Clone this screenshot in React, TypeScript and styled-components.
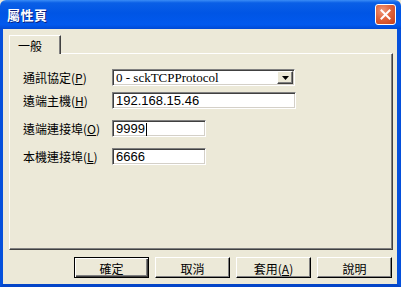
import React from "react";
import styled, { createGlobalStyle } from "styled-components";

const GlobalStyle = createGlobalStyle`
  html, body {
    margin: 0;
    padding: 0;
    background: #ece9d8;
  }
  body {
    font-family: "Noto Sans CJK TC", "Liberation Sans", sans-serif;
    font-size: 12px;
  }
`;

const Window = styled.div`
  width: 401px;
  height: 287px;
  display: flex;
  flex-direction: column;
  overflow: hidden;
`;

const TitleBar = styled.div`
  height: 29px;
  flex: none;
  display: flex;
  align-items: center;
  justify-content: space-between;
  padding: 0 5px 0 7px;
  background: linear-gradient(
    #3a8cf6 0%,
    #0a5fe6 10%,
    #0055e5 45%,
    #0159ee 85%,
    #0049d4 100%
  );
  border-radius: 6px 6px 0 0;
`;

const Title = styled.span`
  color: #fff;
  font-weight: bold;
  font-size: 13px;
  letter-spacing: 0.5px;
  text-shadow: 1px 1px 0 #0a1e7a;
`;

const CloseButton = styled.div`
  width: 21px;
  height: 21px;
  box-sizing: border-box;
  border: 1px solid #fff;
  border-radius: 3px;
  background: radial-gradient(circle at 35% 30%, #f09a7c 0%, #e0643c 45%, #c63e18 100%);
  display: flex;
  align-items: center;
  justify-content: center;
`;

const Frame = styled.div`
  flex: 1;
  display: flex;
  flex-direction: column;
  background: #ece9d8;
  border-left: 3px solid #0550dc;
  border-right: 4px solid #0550dc;
  border-bottom: 3px solid #0445c8;
  padding: 6px 4px 0 6px;
`;

const TabStrip = styled.div`
  height: 18px;
  display: flex;
  align-items: flex-end;
`;

const Tab = styled.div`
  width: 52px;
  height: 19px;
  box-sizing: border-box;
  border-top: 1px solid #fff;
  border-left: 1px solid #fff;
  border-right: 1px solid #404040;
  box-shadow: inset -1px 0 0 #808080;
  background: #ece9d8;
  padding: 1px 0 0 8px;
  font-size: 12px;
  color: #000;
  margin-bottom: -1px;
  position: relative;
  z-index: 1;
`;

const Panel = styled.div`
  height: 197px;
  box-sizing: border-box;
  border-top: 1px solid #fff;
  border-left: 1px solid #fff;
  border-right: 1px solid #404040;
  border-bottom: 1px solid #404040;
  box-shadow: inset -1px -1px 0 #808080;
  padding: 15px 0 0 13px;
  display: flex;
  flex-direction: column;
`;

const Row = styled.div<{ $gap: number }>`
  display: flex;
  align-items: center;
  margin-top: ${({ $gap }) => $gap}px;
`;

const Label = styled.span`
  width: 89px;
  flex: none;
  color: #000;
  font-size: 12px;
  line-height: 17px;
  u {
    text-decoration: underline;
  }
`;

const Field = styled.div<{ $width: number; $serif?: boolean }>`
  width: ${({ $width }) => $width}px;
  height: 17px;
  box-sizing: border-box;
  background: #fff;
  border-top: 1px solid #808080;
  border-left: 1px solid #808080;
  border-right: 1px solid #fff;
  border-bottom: 1px solid #fff;
  box-shadow: inset 1px 1px 0 #404040, inset -1px -1px 0 #d4d0c8;
  display: flex;
  align-items: center;
  padding-left: 3px;
  font-family: ${({ $serif }) =>
    $serif ? '"Liberation Serif", serif' : '"Liberation Sans", sans-serif'};
  font-size: 13px;
  color: #000;
`;

const FieldText = styled.span`
  flex: 1;
  white-space: nowrap;
`;

const Caret = styled.span`
  display: inline-block;
  width: 1px;
  height: 13px;
  background: #000;
  vertical-align: middle;
  margin-left: 1px;
`;

const DropButton = styled.div`
  width: 16px;
  height: 13px;
  box-sizing: border-box;
  margin-right: 1px;
  background: #ece9d8;
  border-top: 1px solid #fff;
  border-left: 1px solid #fff;
  border-right: 1px solid #404040;
  border-bottom: 1px solid #404040;
  box-shadow: inset -1px -1px 0 #808080;
  display: flex;
  align-items: center;
  justify-content: center;
`;

const ButtonRow = styled.div`
  display: flex;
  justify-content: flex-end;
  gap: 6px;
  padding: 7px 1px 0 0;
`;

const Button = styled.div<{ $default?: boolean }>`
  width: 75px;
  height: 21px;
  box-sizing: border-box;
  background: #ece9d8;
  border-top: 1px solid ${({ $default }) => ($default ? "#000" : "#fff")};
  border-left: 1px solid ${({ $default }) => ($default ? "#000" : "#fff")};
  border-right: 1px solid #000;
  border-bottom: 1px solid #000;
  box-shadow: ${({ $default }) =>
    $default
      ? "inset 1px 1px 0 #fff, inset -1px -1px 0 #404040, inset -2px -2px 0 #808080"
      : "inset -1px -1px 0 #808080"};
  display: flex;
  align-items: center;
  justify-content: center;
  font-size: 12px;
  color: #000;
  padding-top: 1px;
`;

const App: React.FC = () => {
  return (
    <Window>
      <GlobalStyle />
      <TitleBar>
        <Title>屬性頁</Title>
        <CloseButton>
          <svg width="11" height="11" viewBox="0 0 11 11">
            <path d="M1.5 1.5 L9.5 9.5 M9.5 1.5 L1.5 9.5" stroke="#fff" strokeWidth="2" strokeLinecap="square" />
          </svg>
        </CloseButton>
      </TitleBar>
      <Frame>
        <TabStrip>
          <Tab>一般</Tab>
        </TabStrip>
        <Panel>
          <Row $gap={0}>
            <Label>
              通訊協定(<u>P</u>)
            </Label>
            <Field $width={183} $serif>
              <FieldText>0 - sckTCPProtocol</FieldText>
              <DropButton>
                <svg width="7" height="4" viewBox="0 0 7 4">
                  <path d="M0 0 H7 L3.5 4 Z" fill="#000" />
                </svg>
              </DropButton>
            </Field>
          </Row>
          <Row $gap={6}>
            <Label>
              遠端主機(<u>H</u>)
            </Label>
            <Field $width={184}>
              <FieldText>192.168.15.46</FieldText>
            </Field>
          </Row>
          <Row $gap={11}>
            <Label>
              遠端連接埠(<u>O</u>)
            </Label>
            <Field $width={94}>
              <FieldText>
                9999
                <Caret />
              </FieldText>
            </Field>
          </Row>
          <Row $gap={11}>
            <Label>
              本機連接埠(<u>L</u>)
            </Label>
            <Field $width={94}>
              <FieldText>6666</FieldText>
            </Field>
          </Row>
        </Panel>
        <ButtonRow>
          <Button $default>確定</Button>
          <Button>取消</Button>
          <Button>
            套用(<u>A</u>)
          </Button>
          <Button>說明</Button>
        </ButtonRow>
      </Frame>
    </Window>
  );
};

export default App;
